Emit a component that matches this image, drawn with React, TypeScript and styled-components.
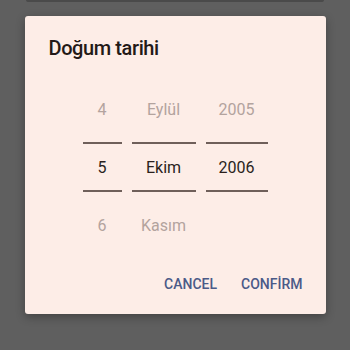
import React from "react";
import styled, { createGlobalStyle } from "styled-components";

const GlobalStyle = createGlobalStyle`
  html, body {
    margin: 0;
    padding: 0;
    width: 350px;
    height: 350px;
    overflow: hidden;
    background: #5f5f5f;
    font-family: Roboto, "Noto Sans", sans-serif;
  }
`;

type Column = { values: [string, string, string]; width: number };

const columns: Column[] = [
  { values: ["4", "5", "6"], width: 39 },
  { values: ["Eylül", "Ekim", "Kasım"], width: 64 },
  { values: ["2005", "2006", ""], width: 62 },
];

function App() {
  return (
    <>
      <GlobalStyle />
      <Screen>
        <BehindStrip />
        <Dialog>
          <Title>Doğum tarihi</Title>
          <Picker>
            {columns.map((col, i) => (
              <Wheel key={i} $width={col.width}>
                <Item $side="top">{col.values[0]}</Item>
                <Divider />
                <Selected>{col.values[1]}</Selected>
                <Divider />
                <Item $side="bottom">{col.values[2]}</Item>
              </Wheel>
            ))}
          </Picker>
          <Actions>
            <TextButton>CANCEL</TextButton>
            <TextButton>CONFİRM</TextButton>
          </Actions>
        </Dialog>
      </Screen>
    </>
  );
}

export default App;

const Screen = styled.div`
  width: 350px;
  height: 350px;
  display: flex;
  flex-direction: column;
  align-items: center;
`;

const BehindStrip = styled.div`
  width: 298px;
  height: 2px;
  background: #4a4a4a;
  border-radius: 0 0 3px 3px;
`;

const Dialog = styled.div`
  box-sizing: border-box;
  width: 301px;
  height: 298px;
  margin-top: 14px;
  background: #fdede7;
  border-radius: 3px;
  box-shadow: 0 3px 10px rgba(0, 0, 0, 0.3);
  display: flex;
  flex-direction: column;
`;

const Title = styled.h2`
  margin: 20px 0 0 24px;
  font-size: 20px;
  line-height: 24px;
  font-weight: 500;
  letter-spacing: -0.4px;
  color: #231917;
`;

const Picker = styled.div`
  margin-top: 20px;
  display: flex;
  justify-content: center;
  gap: 10px;
`;

const Wheel = styled.div<{ $width: number }>`
  width: ${(p) => p.$width}px;
  display: flex;
  flex-direction: column;
`;

const Item = styled.div<{ $side: "top" | "bottom" }>`
  height: 58px;
  display: flex;
  align-items: center;
  justify-content: center;
  font-size: 16px;
  color: #b3a39e;
  margin-bottom: ${(p) => (p.$side === "top" ? "4px" : "0")};
  margin-top: ${(p) => (p.$side === "bottom" ? "4px" : "0")};
`;

const Selected = styled.div`
  height: 46px;
  display: flex;
  align-items: center;
  justify-content: center;
  font-size: 16px;
  color: #2a1f1c;
`;

const Divider = styled.div`
  height: 2px;
  background: #6f5f5a;
`;

const Actions = styled.div`
  margin-top: 12px;
  padding: 0 15px 0 0;
  display: flex;
  justify-content: flex-end;
  gap: 8px;
`;

const TextButton = styled.button`
  height: 36px;
  min-width: 64px;
  padding: 0 8px;
  border: none;
  background: transparent;
  font-family: Roboto, "Noto Sans", sans-serif;
  font-size: 14px;
  font-weight: 500;
  letter-spacing: 0;
  color: #4b5a88;
  cursor: pointer;
`;
